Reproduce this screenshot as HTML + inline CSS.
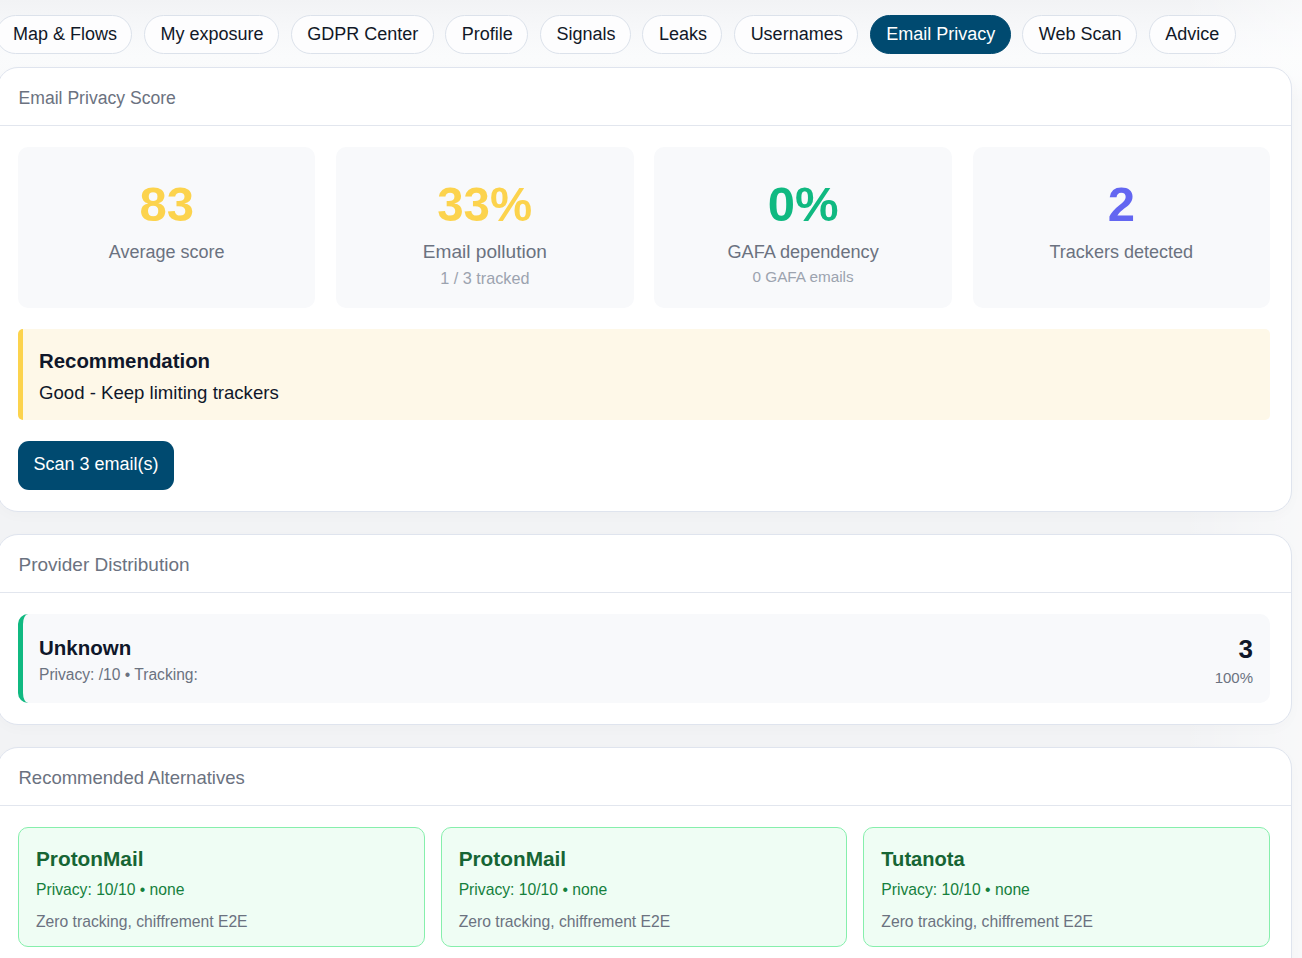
<!DOCTYPE html>
<html><head><meta charset="utf-8">
<style>
*{box-sizing:border-box;margin:0;padding:0}
html,body{width:1302px;height:958px;overflow:hidden}
body{background:#f2f3f5;font-family:"Liberation Sans",sans-serif;position:relative;color:#111827}
.bgtop{position:absolute;left:0;top:0;width:1302px;height:100px;background:linear-gradient(180deg,#f2f3f5 0px,#f7f8fa 32px,#fafbfc 56px,#f9fafb 75px,rgba(249,250,251,0) 100px)}
.bgglow{position:absolute;left:0;top:0;width:1302px;height:958px;background:linear-gradient(90deg,rgba(255,255,255,0) 0px,rgba(255,255,255,0) 1180px,rgba(255,255,255,.45) 1302px)}
.tabs{position:absolute;left:-3.7px;top:15px;display:flex;gap:11.6px;height:39px}
.tab{height:39px;border:1px solid #dce2eb;border-radius:999px;background:#fdfdfe;padding:0 14.4px 0 15.6px;font-size:18px;line-height:37px;color:#111827;white-space:nowrap}
.tab.on{background:#004a70;border-color:#004a70;color:#fff}
.card{position:absolute;left:-3px;width:1295px;background:#fff;border:1px solid #dfe4ee;border-radius:21px;box-shadow:0 4px 14px rgba(15,23,42,.02)}
.hd{height:58px;border-bottom:1px solid #e2e6ee;padding-left:20.5px;font-size:18.2px;color:#6b7280;line-height:60px}
.bd{padding:20.8px 21px 20.8px 20px}
.stats{display:grid;grid-template-columns:repeat(4,1fr);gap:20.8px;height:161px}
.stat{background:#f8f9fb;border-radius:10px;text-align:center;padding-top:27px}
.num{font-size:49px;font-weight:bold;line-height:56px;position:relative;top:2px}
.lbl{font-size:18.4px;color:#6b7280;line-height:26px;margin-top:9px}
.sub{font-size:15.8px;color:#9ca3af;line-height:20px;margin-top:3px}
.rec{margin-top:20.8px;height:91px;background:#fef8e8;border-left:5px solid #fcd34d;border-radius:5px;padding:18px 16px}
.rec h4{font-size:20.4px;font-weight:bold;line-height:28px;color:#0f172a}
.rec p{font-size:18.6px;line-height:28px;color:#0f172a;margin-top:4px}
.btn{margin-top:21.6px;width:156px;height:49px;background:#004a70;border-radius:11px;color:#fff;font-size:18px;line-height:47px;text-align:center}
.prov{height:89px;background:#f8f9fb;border-left:5px solid #10b981;border-radius:10px;padding:0 17px 0 16px;display:flex;justify-content:space-between;align-items:center}
.alts{display:grid;grid-template-columns:repeat(3,1fr);gap:16px}
.an{font-size:20.8px;font-weight:bold;color:#166534;line-height:26px;position:relative;top:2px}
.ap{font-size:15.7px;color:#15803d;line-height:20px;margin-top:8px;position:relative;top:2px}
.ad{font-size:15.7px;color:#6b7280;line-height:20px;margin-top:12px;position:relative;top:2px}
.alt{height:120px;background:#effdf4;border:1px solid #86efac;border-radius:10px;padding:16px 17px}
</style></head><body>
<div class="bgtop"></div><div class="bgglow"></div>
<div class="tabs">
<div class="tab">Map &amp; Flows</div>
<div class="tab">My exposure</div>
<div class="tab">GDPR Center</div>
<div class="tab">Profile</div>
<div class="tab">Signals</div>
<div class="tab">Leaks</div>
<div class="tab">Usernames</div>
<div class="tab on">Email Privacy</div>
<div class="tab">Web Scan</div>
<div class="tab" style="padding-right:15.4px">Advice</div>
</div>

<div class="card" style="top:67px;height:445px">
 <div class="hd" style="font-size:17.6px">Email Privacy Score</div>
 <div class="bd">
  <div class="stats">
   <div class="stat"><div class="num" style="color:#fcd34d">83</div><div class="lbl" style="font-size:18px">Average score</div></div>
   <div class="stat"><div class="num" style="color:#fcd34d;transform:scaleX(0.968)">33%</div><div class="lbl" style="font-size:19.1px">Email pollution</div><div class="sub" style="font-size:16.2px">1 / 3 tracked</div></div>
   <div class="stat"><div class="num" style="color:#10b981">0%</div><div class="lbl" style="font-size:18.15px">GAFA dependency</div><div class="sub" style="font-size:15.3px;margin-top:2px">0 GAFA emails</div></div>
   <div class="stat"><div class="num" style="color:#6366f1">2</div><div class="lbl" style="font-size:18.05px">Trackers detected</div></div>
  </div>
  <div class="rec"><h4>Recommendation</h4><p>Good - Keep limiting trackers</p></div>
  <div class="btn">Scan 3 email(s)</div>
 </div>
</div>

<div class="card" style="top:534px;height:191px">
 <div class="hd" style="font-size:19px">Provider Distribution</div>
 <div class="bd">
  <div class="prov">
   <div><div style="font-size:20.5px;font-weight:bold;line-height:26px;color:#0f172a;position:relative;top:2px">Unknown</div><div style="font-size:15.6px;color:#6b7280;line-height:20px;margin-top:4px;position:relative;top:2px">Privacy: /10 • Tracking:</div></div>
   <div style="text-align:right"><div style="font-size:26px;font-weight:bold;line-height:30px;color:#0f172a;position:relative;top:3px">3</div><div style="font-size:15px;color:#6b7280;line-height:20px;margin-top:4px;position:relative;top:3px">100%</div></div>
  </div>
 </div>
</div>

<div class="card" style="top:747px;height:240px">
 <div class="hd" style="font-size:18.5px">Recommended Alternatives</div>
 <div class="bd">
  <div class="alts">
   <div class="alt"><div class="an">ProtonMail</div><div class="ap">Privacy: 10/10 • none</div><div class="ad">Zero tracking, chiffrement E2E</div></div>
   <div class="alt"><div class="an">ProtonMail</div><div class="ap">Privacy: 10/10 • none</div><div class="ad">Zero tracking, chiffrement E2E</div></div>
   <div class="alt"><div class="an" style="font-size:20.1px">Tutanota</div><div class="ap">Privacy: 10/10 • none</div><div class="ad">Zero tracking, chiffrement E2E</div></div>
  </div>
 </div>
</div>
</body></html>
